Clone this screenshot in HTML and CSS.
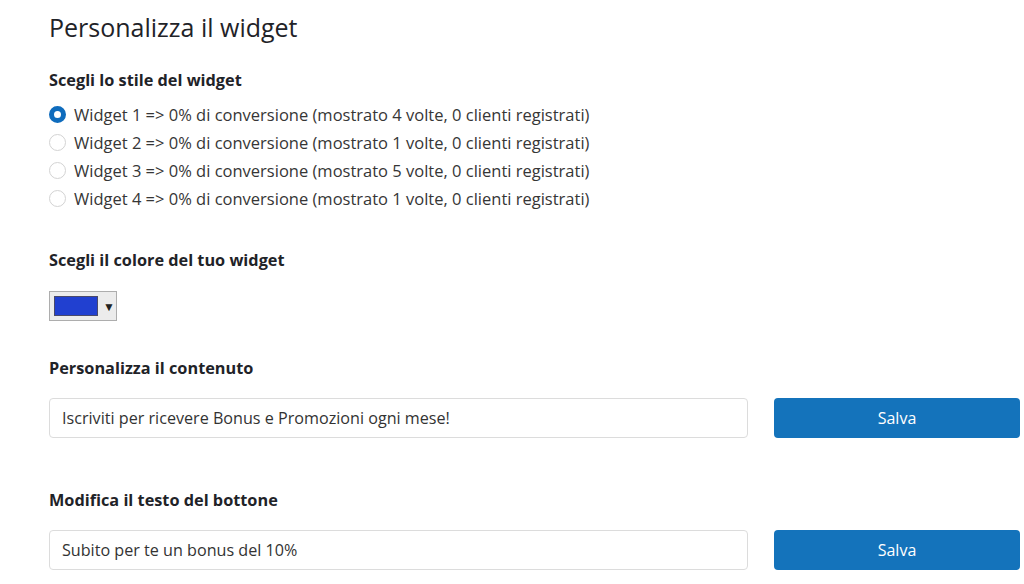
FILE: index.html
```html
<!DOCTYPE html>
<html lang="it">
<head>
<meta charset="utf-8">
<title>Personalizza il widget</title>
<link rel="stylesheet" href="styles.css">
</head>
<body>
<main class="page">
  <h1 class="title">Personalizza il widget</h1>

  <section class="section section-style">
    <h2 class="label">Scegli lo stile del widget</h2>
    <ul class="radios">
      <li class="radio-row"><span class="radio checked"></span><span class="radio-text">Widget 1 =&gt; 0% di conversione (mostrato 4 volte, 0 clienti registrati)</span></li>
      <li class="radio-row"><span class="radio"></span><span class="radio-text">Widget 2 =&gt; 0% di conversione (mostrato 1 volte, 0 clienti registrati)</span></li>
      <li class="radio-row"><span class="radio"></span><span class="radio-text">Widget 3 =&gt; 0% di conversione (mostrato 5 volte, 0 clienti registrati)</span></li>
      <li class="radio-row"><span class="radio"></span><span class="radio-text">Widget 4 =&gt; 0% di conversione (mostrato 1 volte, 0 clienti registrati)</span></li>
    </ul>
  </section>

  <section class="section section-color">
    <h2 class="label">Scegli il colore del tuo widget</h2>
    <div class="color-picker"><span class="swatch"></span><span class="arrow">&#9660;</span></div>
  </section>

  <section class="section section-content">
    <h2 class="label">Personalizza il contenuto</h2>
    <div class="field-row">
      <div class="text-input">Iscriviti per ricevere Bonus e Promozioni ogni mese!</div>
      <button class="btn">Salva</button>
    </div>
  </section>

  <section class="section section-button">
    <h2 class="label">Modifica il testo del bottone</h2>
    <div class="field-row">
      <div class="text-input">Subito per te un bonus del 10%</div>
      <button class="btn">Salva</button>
    </div>
  </section>
</main>
</body>
</html>
```

FILE: styles.css
```css
* { box-sizing: border-box; }
html, body { margin: 0; padding: 0; background: #ffffff; }
body {
  font-family: "Open Sans", "Noto Sans", "Liberation Sans", sans-serif;
  color: #212529;
}
.page {
  padding: 9px 4px 0 49px;
}
.title {
  margin: 0;
  font-size: 25px;
  font-weight: 400;
  line-height: 36px;
  color: #1f2328;
}
.label {
  margin: 0;
  font-size: 16.3px;
  font-weight: 700;
  line-height: 24px;
  color: #1f2328;
}
.section-style { margin-top: 23px; }
.radios {
  list-style: none;
  margin: 8px 0 0 0;
  padding: 0;
}
.radio-row {
  display: flex;
  align-items: center;
  height: 28px;
  gap: 8px;
}
.radio {
  width: 17px;
  height: 17px;
  border-radius: 50%;
  border: 1px solid #d3d3d3;
  background: #fff;
  flex: none;
}
.radio.checked {
  border: 5px solid #0f6cbd;
}
.radio-text {
  font-size: 16.5px;
  color: #363636;
  white-space: nowrap;
}
.section-color { margin-top: 36px; }
.color-picker {
  margin-top: 19px;
  width: 68px;
  height: 30px;
  background: #ececec;
  border: 1px solid #adadad;
  display: flex;
  align-items: center;
  padding-left: 4px;
  gap: 4px;
}
.swatch {
  width: 44px;
  height: 20px;
  background: #2140d0;
  border: 1px solid #4a4a6a;
}
.arrow {
  font-size: 12px;
  color: #222;
  margin-left: 1px;
}
.section-content { margin-top: 35px; }
.section-button { margin-top: 50px; }
.field-row {
  display: flex;
  gap: 26px;
  margin-top: 18px;
}
.text-input {
  flex: 0 0 699px;
  height: 40px;
  border: 1px solid #dcdcdc;
  border-radius: 4px;
  padding: 0 12px;
  display: flex;
  align-items: center;
  font-size: 16.15px;
  color: #333;
  white-space: nowrap;
}
.btn {
  flex: 0 0 246px;
  height: 40px;
  border: none;
  border-radius: 4px;
  background: #1473bb;
  color: #fff;
  font-family: inherit;
  font-size: 16px;
  padding: 0;
}
```
